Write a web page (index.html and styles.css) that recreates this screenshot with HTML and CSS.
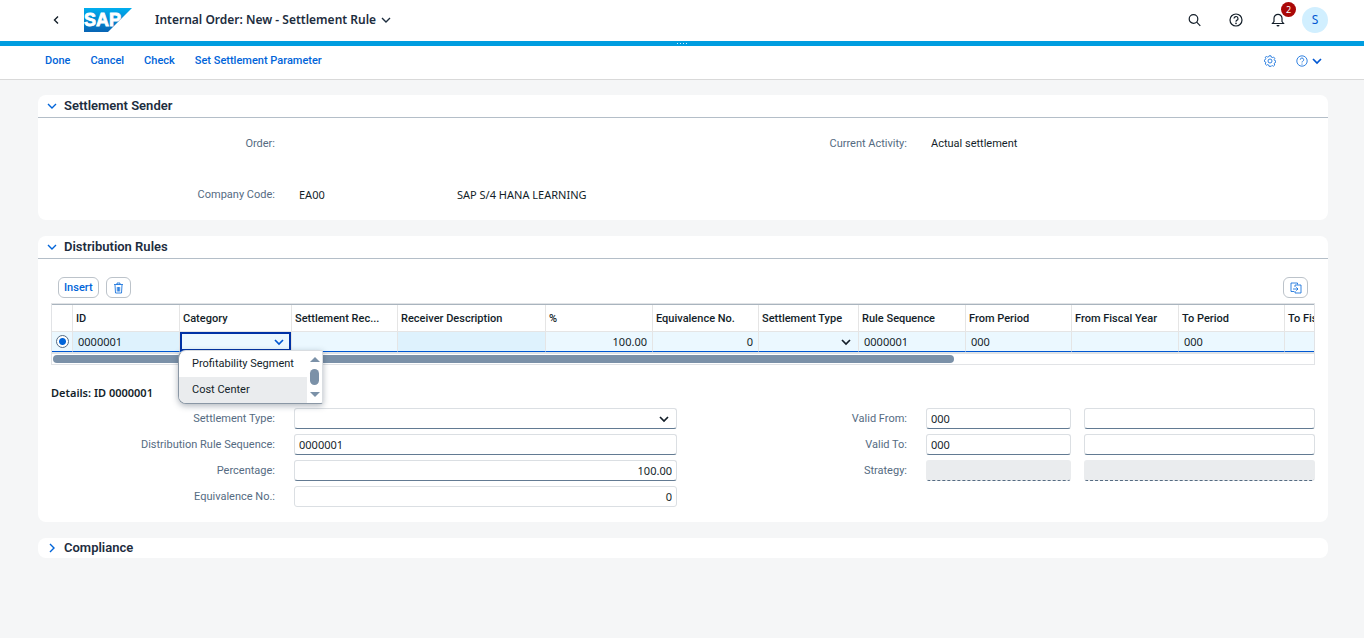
FILE: index.html
```html
<!DOCTYPE html>
<html lang="en">
<head>
<meta charset="utf-8">
<title>Internal Order: New - Settlement Rule</title>
<link rel="stylesheet" href="styles.css">
</head>
<body>
<header class="shell">
  <button class="icon-btn back" aria-label="Back"><svg width="8" height="10" viewBox="0 0 8 10"><path d="M6 1.500 2.500 5 6 8.500" class="stroke"/></svg></button>
  <svg class="logo" width="48" height="24" viewBox="0 0 48 24" role="img" aria-label="SAP">
    <defs><linearGradient id="brand" x1="0" y1="0" x2="0" y2="1"><stop offset="0" stop-color="#00aeef"/><stop offset="1" stop-color="#0864b4"/></linearGradient></defs>
    <path d="M0 0H48L24 24H0Z" fill="url(#brand)"/>
    <text x="0" y="18" class="logo-text">SAP</text>
  </svg>
  <button class="title">Internal Order: New - Settlement Rule
    <svg width="10" height="8" viewBox="0 0 10 8"><path d="m1 2 4 4 4-4" class="stroke"/></svg>
  </button>
  <div class="shell-actions">
    <button class="icon-btn" aria-label="Search"><svg width="14" height="14" viewBox="0 0 14 14"><circle cx="6.500" cy="6" r="4.300" class="line"/><path d="m9.700 9.200 3.600 3.600" class="line"/></svg></button>
    <button class="icon-btn" aria-label="Help"><svg width="14" height="14" viewBox="0 0 14 14"><circle cx="7" cy="7" r="6" class="line"/><path d="M5 5.500a2 2 0 1 1 2.700 1.900Q7 7.700 7 8.800" class="line"/><circle cx="7" cy="10.400" r=".8" fill="currentColor"/></svg></button>
    <button class="icon-btn bell" aria-label="Notifications"><svg width="14" height="14" viewBox="0 0 14 14"><path d="M1.500 10.500h11L11 8.500V5.300a4 4 0 0 0-8 0v3.200Z" class="line"/><path d="M5.500 12h3a1.500 1.500 0 0 1-3 0Z" fill="currentColor"/></svg><span class="badge">2</span></button>
    <button class="avatar" aria-label="Profile">S</button>
  </div>
</header>
<div class="brand-line"><span></span><span></span><span></span><span></span></div>
<nav class="toolbar">
  <button class="link-btn">Done</button>
  <button class="link-btn">Cancel</button>
  <button class="link-btn">Check</button>
  <button class="link-btn">Set Settlement Parameter</button>
  <div class="toolbar-end">
    <button class="icon-btn blue" aria-label="Settings"><svg width="12" height="12" viewBox="0 0 12 12"><path d="M5 .8h2l.3 1.300 1 .5 1.200-.6 1.300 1.300-.6 1.200.4 1 1.100.3v1.600l-1.100.4-.4 1 .6 1.200-1.300 1.200-1.200-.6-1 .4L7 11.300H5l-.3-1.300-1-.4-1.200.6L1.200 9l.6-1.200-.4-1L.3 6.400V5l1.100-.5.4-1-.6-1.200L2.500 1.500l1.200.6 1-.4Z" class="thin"/><circle cx="6" cy="6" r="2" class="thin"/></svg></button>
    <button class="icon-btn blue" aria-label="Help menu"><svg width="12" height="12" viewBox="0 0 12 12"><circle cx="6" cy="6" r="5.200" class="thin"/><path d="M4.300 4.700a1.700 1.700 0 1 1 2.300 1.600Q6 6.600 6 7.500" class="thin"/><circle cx="6" cy="9" r=".6" fill="currentColor"/></svg><svg width="10" height="8" viewBox="0 0 10 8"><path d="m1 2 4 4 4-4" class="bold"/></svg></button>
  </div>
</nav>
<main>
  <section class="card">
    <h2><button class="toggle"><svg width="10" height="8" viewBox="0 0 10 8"><path d="m1 2 4 4 4-4" class="stroke"/></svg>Settlement Sender</button></h2>
    <div class="sender">
      <div class="fields left"><span class="label">Order:</span><span></span></div>
      <div class="fields right"><span class="label">Current Activity:</span><span class="value">Actual settlement</span></div>
      <div class="fields left"><span class="label">Company Code:</span><span class="values"><span>EA00</span><span>SAP S/4 HANA LEARNING</span></span></div>
    </div>
  </section>

  <section class="card">
    <h2><button class="toggle"><svg width="10" height="8" viewBox="0 0 10 8"><path d="m1 2 4 4 4-4" class="stroke"/></svg>Distribution Rules</button></h2>
    <div class="rules">
      <div class="table-tools">
        <button class="btn">Insert</button>
        <button class="btn square" aria-label="Delete"><svg width="11" height="12" viewBox="0 0 11 12"><path d="M1 2.500h9M4 2.500V1h3v1.500M2 3l.5 8h6L9 3M4.300 5v4.500M5.500 5v4.500M6.700 5v4.500" class="thin"/></svg></button>
        <button class="btn square end" aria-label="Open settings"><svg width="12" height="12" viewBox="0 0 12 12"><path d="M4 9.500H1V1h6.500v1.500M5 5V3h6v8H5V9M3 7h5M6.300 5.300 8 7 6.300 8.700" class="thin"/></svg></button>
      </div>
      <div class="table-frame">
        <div class="table-clip">
          <table>
            <colgroup><col class="w-sel"><col class="w-m"><col class="w-cat"><col class="w-s"><col class="w-desc"><col class="w-m"><col class="w-s"><col class="w-type"><col class="w-m"><col class="w-s"><col class="w-m"><col class="w-s"><col class="w-m"></colgroup>
            <thead><tr><th></th><th>ID</th><th>Category</th><th>Settlement Rec...</th><th>Receiver Description</th><th>%</th><th>Equivalence No.</th><th>Settlement Type</th><th>Rule Sequence</th><th>From Period</th><th>From Fiscal Year</th><th>To Period</th><th>To Fiscal Year</th></tr></thead>
            <tbody><tr>
              <td class="sel"><input type="radio" checked aria-label="Select row 0000001"></td>
              <td class="ro">0000001</td>
              <td class="active"><select aria-label="Category"><option></option><option>Profitability Segment</option><option>Cost Center</option></select></td>
              <td></td><td class="ro"></td><td class="num">100.00</td><td class="num">0</td>
              <td class="type"><select aria-label="Settlement Type"><option></option></select></td>
              <td>0000001</td><td>000</td><td></td><td>000</td><td></td>
            </tr></tbody>
          </table>
          <div class="track"><div class="thumb"></div></div>
        </div>
        <div class="popup">
          <ul role="listbox" aria-label="Category options"><li role="option">Profitability Segment</li><li role="option" class="hover">Cost Center</li></ul>
          <div class="popup-bar"><span class="up"></span><span class="grip"></span><span class="down"></span></div>
        </div>
      </div>
      <h3>Details: ID 0000001</h3>
      <div class="details">
        <div class="fields left">
          <label for="stype">Settlement Type:</label><select id="stype" class="box"><option></option></select>
          <label for="seq">Distribution Rule Sequence:</label><input id="seq" class="box" value="0000001">
          <label for="pct">Percentage:</label><input id="pct" class="box numeric" value="100.00">
          <label for="eq">Equivalence No.:</label><input id="eq" class="box numeric plain" value="0">
        </div>
        <div class="fields right">
          <label for="vf">Valid From:</label><div class="pair"><input id="vf" class="box" value="000"><input class="box" aria-label="Valid from year"></div>
          <label for="vt">Valid To:</label><div class="pair"><input id="vt" class="box" value="000"><input class="box" aria-label="Valid to year"></div>
          <label for="st">Strategy:</label><div class="pair"><input id="st" class="box" disabled><input class="box" aria-label="Strategy description" disabled></div>
        </div>
      </div>
    </div>
  </section>

  <section class="card closed">
    <h2><button class="toggle"><svg width="10" height="10" viewBox="0 0 10 10"><path d="m3 1 4 4-4 4" class="stroke"/></svg>Compliance</button></h2>
  </section>
</main>
</body>
</html>
```
FILE: styles.css
```css
* { box-sizing: border-box; }
body { margin: 0; background: #f5f6f7; color: #131e29; font: 11px/16px "Noto Sans", "Open Sans", sans-serif; }
button, input, select { margin: 0; font: inherit; color: inherit; }
button { padding: 0; border: 0; background: none; cursor: pointer; }
h2, h3, ul { margin: 0; padding: 0; }
svg { display: block; flex: none; fill: none; }
.stroke { stroke: currentColor; stroke-width: 1.4; }
.line { stroke: currentColor; stroke-width: 1.2; }
.thin { stroke: currentColor; stroke-width: 0.8; }
.bold { stroke: #0057d2; stroke-width: 1.7; }

.shell { display: flex; align-items: center; height: 41px; padding: 0 36px 2px 52px; background: #fff; }
.icon-btn { display: flex; align-items: center; gap: 4px; }
.logo { margin: 0 23px 0 24px; }
.logo-text { fill: #fff; stroke: #fff; stroke-width: 0.8; font: bold 18px "Liberation Sans", Arial, sans-serif; }
.title { display: flex; align-items: center; gap: 5px; font-weight: 600; font-size: 12px; color: #1d2d3e; }
.shell-actions { display: flex; align-items: center; gap: 28px; margin-left: auto; }
.bell { position: relative; }
.badge { position: absolute; left: 10px; top: -11px; width: 15px; height: 15px; border-radius: 8px; background: #aa0808; color: #fff; font-size: 9px; line-height: 15px; text-align: center; }
.avatar { width: 26px; height: 26px; margin-left: -11px; border-radius: 50%; background: #d1efff; color: #0057d2; font-size: 12px; }
.brand-line { display: flex; justify-content: center; align-items: center; gap: 2px; height: 5px; background: #009de0; }
.brand-line span { width: 1px; height: 1px; background: #d1efff; }

.toolbar { display: flex; align-items: center; gap: 20px; height: 34px; padding: 0 42px 3px 45px; border-bottom: 1px solid #d9d9d9; background: #fff; }
.link-btn { font: 500 11px/16px Roboto, sans-serif; color: #0064d9; }
.toolbar-end { display: flex; gap: 20px; margin-left: auto; }
.blue { color: #0064d9; }

main { display: flex; flex-direction: column; gap: 16px; padding: 15px 36px 0 38px; }
.card { border-radius: 8px; background: #fff; }
h2 { padding: 0 9px; border-bottom: 1px solid #b4bec8; font-size: 13px; line-height: 22px; }
.closed h2 { border-bottom: 0; line-height: 20px; }
.toggle { display: flex; align-items: center; gap: 7px; font: 600 13px/22px Roboto, sans-serif; color: #1d2d3e; }
.closed .toggle { line-height: 20px; }
.toggle svg { color: #0064d9; }

.sender { display: grid; grid-template-columns: 626fr 638fr; row-gap: 35px; padding: 18px 13px 17px; }
.fields { display: grid; column-gap: 19px; row-gap: 5px; align-items: center; align-content: start; }
.left { grid-template-columns: 224fr 383fr; }
.right { grid-template-columns: 230fr 389fr; }
.label, label { text-align: right; color: #556b82; font-family: Roboto, sans-serif; }
.value { padding-left: 5px; font-family: Roboto, sans-serif; }
.values { display: grid; grid-template-columns: 158fr 220fr; padding-left: 5px; }

.rules { padding: 18px 13px 15px; }
.table-tools { display: flex; gap: 7px; padding: 0 7px; margin-bottom: 5px; }
.btn { height: 21px; padding: 0 5px; border: 1px solid #bcc3ca; border-radius: 6px; font: 500 11px/16px Roboto, sans-serif; color: #0064d9; background: #fff; }
.square { display: grid; place-items: center; width: 25px; padding: 0; }
.end { margin-left: auto; }

.table-frame { position: relative; }
.table-clip { overflow: hidden; border: 1px solid #e1e3e6; }
table { width: 1339px; table-layout: fixed; border-collapse: separate; border-spacing: 0; border-top: 1px solid #a9b4be; border-bottom: 2px solid #dfe3e6; }
.w-sel { width: 21px; }
.w-s { width: 106px; }
.w-m { width: 107px; }
.w-cat { width: 112px; }
.w-desc { width: 148px; }
.w-type { width: 100px; }
th, td { height: 27px; padding: 0 3px; border-right: 1px solid #e5e5e5; border-bottom: 1px solid #e5e5e5; text-align: left; white-space: nowrap; }
th { padding-top: 2px; font: 500 11px/16px Roboto, sans-serif; }
td { height: 20px; padding: 0 5px; border-bottom-color: #0057d2; background: #ebf8ff; }
.ro { background: #def2fd; }
.num { text-align: right; }
.sel { padding: 0; text-align: center; }
td select { display: block; width: 100%; height: 19px; border: 0; }
.active, .type { padding: 0; }
.active select { border: 2px solid #0032a5; outline: 0; }
select { appearance: none; border-radius: 0; background: transparent url("data:image/svg+xml,%3Csvg xmlns='http://www.w3.org/2000/svg' width='10' height='8'%3E%3Cpath d='m1 2 4 4 4-4' fill='none' stroke='%23131e29' stroke-width='1.700'/%3E%3C/svg%3E") no-repeat right 7px center; }
.active select { background-position: right 5px center; background-image: url("data:image/svg+xml,%3Csvg xmlns='http://www.w3.org/2000/svg' width='10' height='8'%3E%3Cpath d='m1 2 4 4 4-4' fill='none' stroke='%230057d2' stroke-width='1.700'/%3E%3C/svg%3E"); }
input[type="radio"] { display: block; appearance: none; width: 13px; height: 13px; margin: 0 auto; border: 1px solid #556b82; border-radius: 50%; background: radial-gradient(circle, #0064d9 3px, #fff 4px); }
.track { height: 10px; padding: 1px; }
.thumb { width: 901px; height: 8px; border-radius: 4px; background: #7b91a8; }

.popup { position: absolute; left: 127px; top: 47px; display: flex; width: 145px; overflow: hidden; border: 1px solid #8a97a5; border-top-color: #d9dde1; border-right-color: #d9dde1; border-radius: 8px 2px 2px 8px; background: #fff; box-shadow: 0 2px 6px rgba(34, 53, 72, 0.35); }
.popup ul { flex: 1; list-style: none; font-family: Roboto, sans-serif; }
.popup li { padding: 5px 0 5px 13px; white-space: nowrap; }
.popup .hover { background: #eaecee; }
.popup-bar { display: flex; flex-direction: column; align-items: center; justify-content: space-between; width: 15px; padding: 6px 0; }
.up, .down { border: 5px solid transparent; border-top-width: 0; border-bottom: 5px solid #7b91a8; }
.down { border-bottom-width: 0; border-top: 5px solid #7b91a8; }
.grip { width: 9px; height: 16px; border-radius: 5px; background: #7b91a8; }

h3 { margin-top: 20px; font-size: 11px; font-weight: 600; line-height: 16px; }
.details { display: grid; grid-template-columns: 626fr 638fr; margin-top: 7px; }
.pair { display: grid; grid-template-columns: 145fr 231fr; gap: 13px; }
.box { width: 100%; min-width: 0; height: 21px; padding: 0 4px; border: 1px solid #dbdfe3; border-bottom-color: #627a92; border-radius: 3px; background-color: #fff; }
.numeric { text-align: right; }
.plain { border-bottom-color: #dbdfe3; }
.box:disabled { border-color: #eaecee; border-bottom: 1px dashed #556b82; background: #eaecee; }
```
